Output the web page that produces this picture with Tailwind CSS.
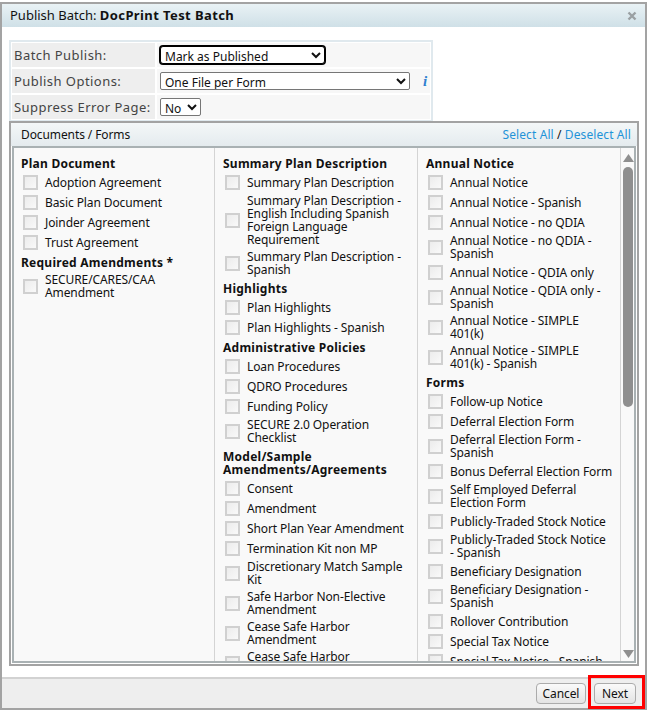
<!DOCTYPE html>
<html lang="en">
<head>
  <meta charset="UTF-8" />
  <title>Publish Batch</title>
  <script src="https://cdn.jsdelivr.net/npm/@tailwindcss/browser@4"></script>
</head>
<body class="bg-white w-[649px] h-[711px] overflow-hidden pt-[2px] font-['Noto_Sans','Liberation_Sans',sans-serif] text-[12px] leading-[13px] tracking-[-0.1px] text-[#111]">

  <!-- Modal -->
  <div class="relative w-[647px] h-[708px] border-2 border-[#a3a3a3] flex flex-col bg-white">

    <!-- Title bar -->
    <div class="h-[23px] shrink-0 flex items-center justify-between pl-[8px] pr-[8px] bg-gradient-to-b from-[#e9f2f5] to-[#cfe0e7] text-[13px] tracking-normal">
      <div>Publish Batch: <b class="tracking-[0.4px]">DocPrint Test Batch</b></div>
      <svg width="10" height="10" viewBox="0 0 10 10"><path d="M1.5 1.5 8.5 8.5M8.5 1.5 1.5 8.5" stroke="#9aa0a3" stroke-width="2.4" /></svg>
    </div>

    <!-- Body -->
    <div class="flex-1 min-h-0 pt-[13px] pl-[7px] pr-[6px] flex flex-col">

      <!-- Options table -->
      <div class="w-[424px] h-[82px] border-2 border-[#e0e9ee] p-[1px] flex flex-col gap-[2px] text-[13px] text-[#444] tracking-[0.45px]">
        <div class="flex gap-[2px] h-[24px]">
          <div class="w-[143px] bg-[#eeeeee] flex items-center pl-[2px]">Batch Publish:</div>
          <div class="flex-1 bg-[#f7f7f7] flex items-center pl-[3px]">
            <select class="w-[165px] h-[18px] py-0 pl-0 border border-black ring-1 ring-black rounded-[3px] text-[12px] text-[#111] tracking-normal bg-white">
              <option>Mark as Published</option>
            </select>
          </div>
        </div>
        <div class="flex gap-[2px] h-[24px]">
          <div class="w-[143px] bg-[#eeeeee] flex items-center pl-[2px]">Publish Options:</div>
          <div class="flex-1 bg-[#f7f7f7] flex items-center pl-[3px]">
            <select class="w-[250px] h-[18px] py-0 pl-0 border border-[#767676] rounded-[2px] text-[12px] text-[#111] tracking-normal bg-white">
              <option>One File per Form</option>
            </select>
            <span class="ml-[13px] font-['Liberation_Serif',serif] italic font-bold text-[15px] text-[#2f7fd0]">i</span>
          </div>
        </div>
        <div class="flex gap-[2px] h-[24px]">
          <div class="w-[143px] bg-[#eeeeee] flex items-center pl-[2px]">Suppress Error Page:</div>
          <div class="flex-1 bg-[#f7f7f7] flex items-center pl-[3px]">
            <select class="w-[41px] h-[18px] py-0 pl-0 border border-[#767676] rounded-[2px] text-[12px] text-[#111] tracking-normal bg-white">
              <option>No</option>
            </select>
          </div>
        </div>
      </div>

      <!-- Documents / Forms panel -->
      <div class="w-[630px] h-[545px] mt-[-1px] border-2 border-[#a3a3a3] flex flex-col">
        <div class="h-[23px] shrink-0 flex items-center justify-between pl-[10px] pr-[6px] bg-gradient-to-b from-[#f4f7f8] to-[#e4ebee]">
          <span>Documents / Forms</span>
          <span class="tracking-[0.1px]"><a class="text-[#1f93d8]">Select All</a> / <a class="text-[#1f93d8]">Deselect All</a></span>
        </div>
        <div class="flex-1 min-h-0 mx-[1px] mb-[1px] border-2 border-[#a9b1b3] bg-[#f9f9f9] flex overflow-hidden">

          <!-- Column 1 -->
          <div class="w-[201px] shrink-0 border-r border-[#d4d4d4] pt-[6px] pl-[7px] pr-[4px]">
            <div class="font-bold tracking-[0.25px] h-[18px] flex items-center">Plan Document</div>
            <label class="flex items-center gap-[7px] min-h-[20px] py-[2px] pl-[2px]"><span class="w-[15px] h-[15px] shrink-0 border-2 border-[#d0d0d0] bg-gradient-to-br from-[#ececec] to-[#f9f9f9]"></span><span>Adoption Agreement</span></label>
            <label class="flex items-center gap-[7px] min-h-[20px] py-[2px] pl-[2px]"><span class="w-[15px] h-[15px] shrink-0 border-2 border-[#d0d0d0] bg-gradient-to-br from-[#ececec] to-[#f9f9f9]"></span><span>Basic Plan Document</span></label>
            <label class="flex items-center gap-[7px] min-h-[20px] py-[2px] pl-[2px]"><span class="w-[15px] h-[15px] shrink-0 border-2 border-[#d0d0d0] bg-gradient-to-br from-[#ececec] to-[#f9f9f9]"></span><span>Joinder Agreement</span></label>
            <label class="flex items-center gap-[7px] min-h-[20px] py-[2px] pl-[2px]"><span class="w-[15px] h-[15px] shrink-0 border-2 border-[#d0d0d0] bg-gradient-to-br from-[#ececec] to-[#f9f9f9]"></span><span>Trust Agreement</span></label>
            <div class="font-bold tracking-[0.25px] h-[18px] mt-[1px] flex items-center">Required Amendments *</div>
            <label class="flex items-center gap-[7px] min-h-[20px] py-[2px] pl-[2px]"><span class="w-[15px] h-[15px] shrink-0 border-2 border-[#d0d0d0] bg-gradient-to-br from-[#ececec] to-[#f9f9f9]"></span><span>SECURE/CARES/CAA<br />Amendment</span></label>
          </div>

          <!-- Column 2 -->
          <div class="w-[203px] shrink-0 border-r border-[#d4d4d4] pt-[6px] pl-[8px] pr-[4px]">
            <div class="font-bold tracking-[0.25px] h-[18px] flex items-center whitespace-nowrap">Summary Plan Description</div>
            <label class="flex items-center gap-[7px] min-h-[20px] py-[2px] pl-[2px]"><span class="w-[15px] h-[15px] shrink-0 border-2 border-[#d0d0d0] bg-gradient-to-br from-[#ececec] to-[#f9f9f9]"></span><span>Summary Plan Description</span></label>
            <label class="flex items-center gap-[7px] min-h-[20px] py-[2px] pl-[2px]"><span class="w-[15px] h-[15px] shrink-0 border-2 border-[#d0d0d0] bg-gradient-to-br from-[#ececec] to-[#f9f9f9]"></span><span>Summary Plan Description -<br />English Including Spanish<br />Foreign Language<br />Requirement</span></label>
            <label class="flex items-center gap-[7px] min-h-[20px] py-[2px] pl-[2px]"><span class="w-[15px] h-[15px] shrink-0 border-2 border-[#d0d0d0] bg-gradient-to-br from-[#ececec] to-[#f9f9f9]"></span><span>Summary Plan Description -<br />Spanish</span></label>
            <div class="font-bold tracking-[0.25px] h-[18px] mt-[1px] flex items-center">Highlights</div>
            <label class="flex items-center gap-[7px] min-h-[20px] py-[2px] pl-[2px]"><span class="w-[15px] h-[15px] shrink-0 border-2 border-[#d0d0d0] bg-gradient-to-br from-[#ececec] to-[#f9f9f9]"></span><span>Plan Highlights</span></label>
            <label class="flex items-center gap-[7px] min-h-[20px] py-[2px] pl-[2px]"><span class="w-[15px] h-[15px] shrink-0 border-2 border-[#d0d0d0] bg-gradient-to-br from-[#ececec] to-[#f9f9f9]"></span><span>Plan Highlights - Spanish</span></label>
            <div class="font-bold tracking-[0.25px] h-[18px] mt-[1px] flex items-center">Administrative Policies</div>
            <label class="flex items-center gap-[7px] min-h-[20px] py-[2px] pl-[2px]"><span class="w-[15px] h-[15px] shrink-0 border-2 border-[#d0d0d0] bg-gradient-to-br from-[#ececec] to-[#f9f9f9]"></span><span>Loan Procedures</span></label>
            <label class="flex items-center gap-[7px] min-h-[20px] py-[2px] pl-[2px]"><span class="w-[15px] h-[15px] shrink-0 border-2 border-[#d0d0d0] bg-gradient-to-br from-[#ececec] to-[#f9f9f9]"></span><span>QDRO Procedures</span></label>
            <label class="flex items-center gap-[7px] min-h-[20px] py-[2px] pl-[2px]"><span class="w-[15px] h-[15px] shrink-0 border-2 border-[#d0d0d0] bg-gradient-to-br from-[#ececec] to-[#f9f9f9]"></span><span>Funding Policy</span></label>
            <label class="flex items-center gap-[7px] min-h-[20px] py-[2px] pl-[2px]"><span class="w-[15px] h-[15px] shrink-0 border-2 border-[#d0d0d0] bg-gradient-to-br from-[#ececec] to-[#f9f9f9]"></span><span>SECURE 2.0 Operation<br />Checklist</span></label>
            <div class="font-bold tracking-[0.25px] h-[31px] mt-[1px] flex items-center">Model/Sample<br />Amendments/Agreements</div>
            <label class="flex items-center gap-[7px] min-h-[20px] py-[2px] pl-[2px]"><span class="w-[15px] h-[15px] shrink-0 border-2 border-[#d0d0d0] bg-gradient-to-br from-[#ececec] to-[#f9f9f9]"></span><span>Consent</span></label>
            <label class="flex items-center gap-[7px] min-h-[20px] py-[2px] pl-[2px]"><span class="w-[15px] h-[15px] shrink-0 border-2 border-[#d0d0d0] bg-gradient-to-br from-[#ececec] to-[#f9f9f9]"></span><span>Amendment</span></label>
            <label class="flex items-center gap-[7px] min-h-[20px] py-[2px] pl-[2px]"><span class="w-[15px] h-[15px] shrink-0 border-2 border-[#d0d0d0] bg-gradient-to-br from-[#ececec] to-[#f9f9f9]"></span><span>Short Plan Year Amendment</span></label>
            <label class="flex items-center gap-[7px] min-h-[20px] py-[2px] pl-[2px]"><span class="w-[15px] h-[15px] shrink-0 border-2 border-[#d0d0d0] bg-gradient-to-br from-[#ececec] to-[#f9f9f9]"></span><span>Termination Kit non MP</span></label>
            <label class="flex items-center gap-[7px] min-h-[20px] py-[2px] pl-[2px]"><span class="w-[15px] h-[15px] shrink-0 border-2 border-[#d0d0d0] bg-gradient-to-br from-[#ececec] to-[#f9f9f9]"></span><span>Discretionary Match Sample<br />Kit</span></label>
            <label class="flex items-center gap-[7px] min-h-[20px] py-[2px] pl-[2px]"><span class="w-[15px] h-[15px] shrink-0 border-2 border-[#d0d0d0] bg-gradient-to-br from-[#ececec] to-[#f9f9f9]"></span><span>Safe Harbor Non-Elective<br />Amendment</span></label>
            <label class="flex items-center gap-[7px] min-h-[20px] py-[2px] pl-[2px]"><span class="w-[15px] h-[15px] shrink-0 border-2 border-[#d0d0d0] bg-gradient-to-br from-[#ececec] to-[#f9f9f9]"></span><span>Cease Safe Harbor<br />Amendment</span></label>
            <label class="flex items-center gap-[7px] min-h-[20px] py-[2px] pl-[2px]"><span class="w-[15px] h-[15px] shrink-0 border-2 border-[#d0d0d0] bg-gradient-to-br from-[#ececec] to-[#f9f9f9]"></span><span>Cease Safe Harbor<br />Notice</span></label>
          </div>

          <!-- Column 3 -->
          <div class="w-[202px] shrink-0 pt-[6px] pl-[8px] pr-[4px]">
            <div class="font-bold tracking-[0.25px] h-[18px] flex items-center">Annual Notice</div>
            <label class="flex items-center gap-[7px] min-h-[20px] py-[2px] pl-[2px]"><span class="w-[15px] h-[15px] shrink-0 border-2 border-[#d0d0d0] bg-gradient-to-br from-[#ececec] to-[#f9f9f9]"></span><span>Annual Notice</span></label>
            <label class="flex items-center gap-[7px] min-h-[20px] py-[2px] pl-[2px]"><span class="w-[15px] h-[15px] shrink-0 border-2 border-[#d0d0d0] bg-gradient-to-br from-[#ececec] to-[#f9f9f9]"></span><span>Annual Notice - Spanish</span></label>
            <label class="flex items-center gap-[7px] min-h-[20px] py-[2px] pl-[2px]"><span class="w-[15px] h-[15px] shrink-0 border-2 border-[#d0d0d0] bg-gradient-to-br from-[#ececec] to-[#f9f9f9]"></span><span>Annual Notice - no QDIA</span></label>
            <label class="flex items-center gap-[7px] min-h-[20px] py-[2px] pl-[2px]"><span class="w-[15px] h-[15px] shrink-0 border-2 border-[#d0d0d0] bg-gradient-to-br from-[#ececec] to-[#f9f9f9]"></span><span>Annual Notice - no QDIA -<br />Spanish</span></label>
            <label class="flex items-center gap-[7px] min-h-[20px] py-[2px] pl-[2px]"><span class="w-[15px] h-[15px] shrink-0 border-2 border-[#d0d0d0] bg-gradient-to-br from-[#ececec] to-[#f9f9f9]"></span><span>Annual Notice - QDIA only</span></label>
            <label class="flex items-center gap-[7px] min-h-[20px] py-[2px] pl-[2px]"><span class="w-[15px] h-[15px] shrink-0 border-2 border-[#d0d0d0] bg-gradient-to-br from-[#ececec] to-[#f9f9f9]"></span><span>Annual Notice - QDIA only -<br />Spanish</span></label>
            <label class="flex items-center gap-[7px] min-h-[20px] py-[2px] pl-[2px]"><span class="w-[15px] h-[15px] shrink-0 border-2 border-[#d0d0d0] bg-gradient-to-br from-[#ececec] to-[#f9f9f9]"></span><span>Annual Notice - SIMPLE<br />401(k)</span></label>
            <label class="flex items-center gap-[7px] min-h-[20px] py-[2px] pl-[2px]"><span class="w-[15px] h-[15px] shrink-0 border-2 border-[#d0d0d0] bg-gradient-to-br from-[#ececec] to-[#f9f9f9]"></span><span>Annual Notice - SIMPLE<br />401(k) - Spanish</span></label>
            <div class="font-bold tracking-[0.25px] h-[18px] mt-[1px] flex items-center">Forms</div>
            <label class="flex items-center gap-[7px] min-h-[20px] py-[2px] pl-[2px]"><span class="w-[15px] h-[15px] shrink-0 border-2 border-[#d0d0d0] bg-gradient-to-br from-[#ececec] to-[#f9f9f9]"></span><span>Follow-up Notice</span></label>
            <label class="flex items-center gap-[7px] min-h-[20px] py-[2px] pl-[2px]"><span class="w-[15px] h-[15px] shrink-0 border-2 border-[#d0d0d0] bg-gradient-to-br from-[#ececec] to-[#f9f9f9]"></span><span>Deferral Election Form</span></label>
            <label class="flex items-center gap-[7px] min-h-[20px] py-[2px] pl-[2px]"><span class="w-[15px] h-[15px] shrink-0 border-2 border-[#d0d0d0] bg-gradient-to-br from-[#ececec] to-[#f9f9f9]"></span><span>Deferral Election Form -<br />Spanish</span></label>
            <label class="flex items-center gap-[7px] min-h-[20px] py-[2px] pl-[2px]"><span class="w-[15px] h-[15px] shrink-0 border-2 border-[#d0d0d0] bg-gradient-to-br from-[#ececec] to-[#f9f9f9]"></span><span>Bonus Deferral Election Form</span></label>
            <label class="flex items-center gap-[7px] min-h-[20px] py-[2px] pl-[2px]"><span class="w-[15px] h-[15px] shrink-0 border-2 border-[#d0d0d0] bg-gradient-to-br from-[#ececec] to-[#f9f9f9]"></span><span>Self Employed Deferral<br />Election Form</span></label>
            <label class="flex items-center gap-[7px] min-h-[20px] py-[2px] pl-[2px]"><span class="w-[15px] h-[15px] shrink-0 border-2 border-[#d0d0d0] bg-gradient-to-br from-[#ececec] to-[#f9f9f9]"></span><span>Publicly-Traded Stock Notice</span></label>
            <label class="flex items-center gap-[7px] min-h-[20px] py-[2px] pl-[2px]"><span class="w-[15px] h-[15px] shrink-0 border-2 border-[#d0d0d0] bg-gradient-to-br from-[#ececec] to-[#f9f9f9]"></span><span>Publicly-Traded Stock Notice<br />- Spanish</span></label>
            <label class="flex items-center gap-[7px] min-h-[20px] py-[2px] pl-[2px]"><span class="w-[15px] h-[15px] shrink-0 border-2 border-[#d0d0d0] bg-gradient-to-br from-[#ececec] to-[#f9f9f9]"></span><span>Beneficiary Designation</span></label>
            <label class="flex items-center gap-[7px] min-h-[20px] py-[2px] pl-[2px]"><span class="w-[15px] h-[15px] shrink-0 border-2 border-[#d0d0d0] bg-gradient-to-br from-[#ececec] to-[#f9f9f9]"></span><span>Beneficiary Designation -<br />Spanish</span></label>
            <label class="flex items-center gap-[7px] min-h-[20px] py-[2px] pl-[2px]"><span class="w-[15px] h-[15px] shrink-0 border-2 border-[#d0d0d0] bg-gradient-to-br from-[#ececec] to-[#f9f9f9]"></span><span>Rollover Contribution</span></label>
            <label class="flex items-center gap-[7px] min-h-[20px] py-[2px] pl-[2px]"><span class="w-[15px] h-[15px] shrink-0 border-2 border-[#d0d0d0] bg-gradient-to-br from-[#ececec] to-[#f9f9f9]"></span><span>Special Tax Notice</span></label>
            <label class="flex items-center gap-[7px] min-h-[20px] py-[2px] pl-[2px]"><span class="w-[15px] h-[15px] shrink-0 border-2 border-[#d0d0d0] bg-gradient-to-br from-[#ececec] to-[#f9f9f9]"></span><span>Special Tax Notice - Spanish</span></label>
          </div>

          <!-- Scrollbar -->
          <div class="w-[15px] shrink-0 ml-auto border-l border-[#d4d4d4] bg-[#f9f9f9] flex flex-col items-center pt-[6px]">
            <svg width="11" height="8" viewBox="0 0 11 8"><path d="M5.5 0 11 8H0Z" fill="#8f8f8f" /></svg>
            <div class="w-[10px] h-[240px] mt-[5px] rounded-full bg-[#8f8f8f]"></div>
            <svg width="11" height="8" viewBox="0 0 11 8" class="mt-auto mb-[3px]"><path d="M0 0H11L5.5 8Z" fill="#8f8f8f" /></svg>
          </div>
        </div>
      </div>
    </div>

    <!-- Footer -->
    <div class="h-[31px] shrink-0 border-t-2 border-[#d2d2d2] bg-[#eeeeee] flex items-center justify-end gap-[8px] pr-[9px]">
      <button class="w-[50px] h-[21px] rounded-[4px] border border-[#ababab] bg-gradient-to-b from-[#fafafa] to-[#e3e3e3]">Cancel</button>
      <button class="w-[42px] h-[21px] rounded-[4px] border border-[#ababab] bg-gradient-to-b from-[#fafafa] to-[#e3e3e3]">Next</button>
    </div>

    <!-- Annotation round the Next button -->
    <div class="absolute left-[586px] top-[671px] w-[57px] h-[34px] border-[3px] border-[#ff0000]"></div>
  </div>
</body>
</html>
